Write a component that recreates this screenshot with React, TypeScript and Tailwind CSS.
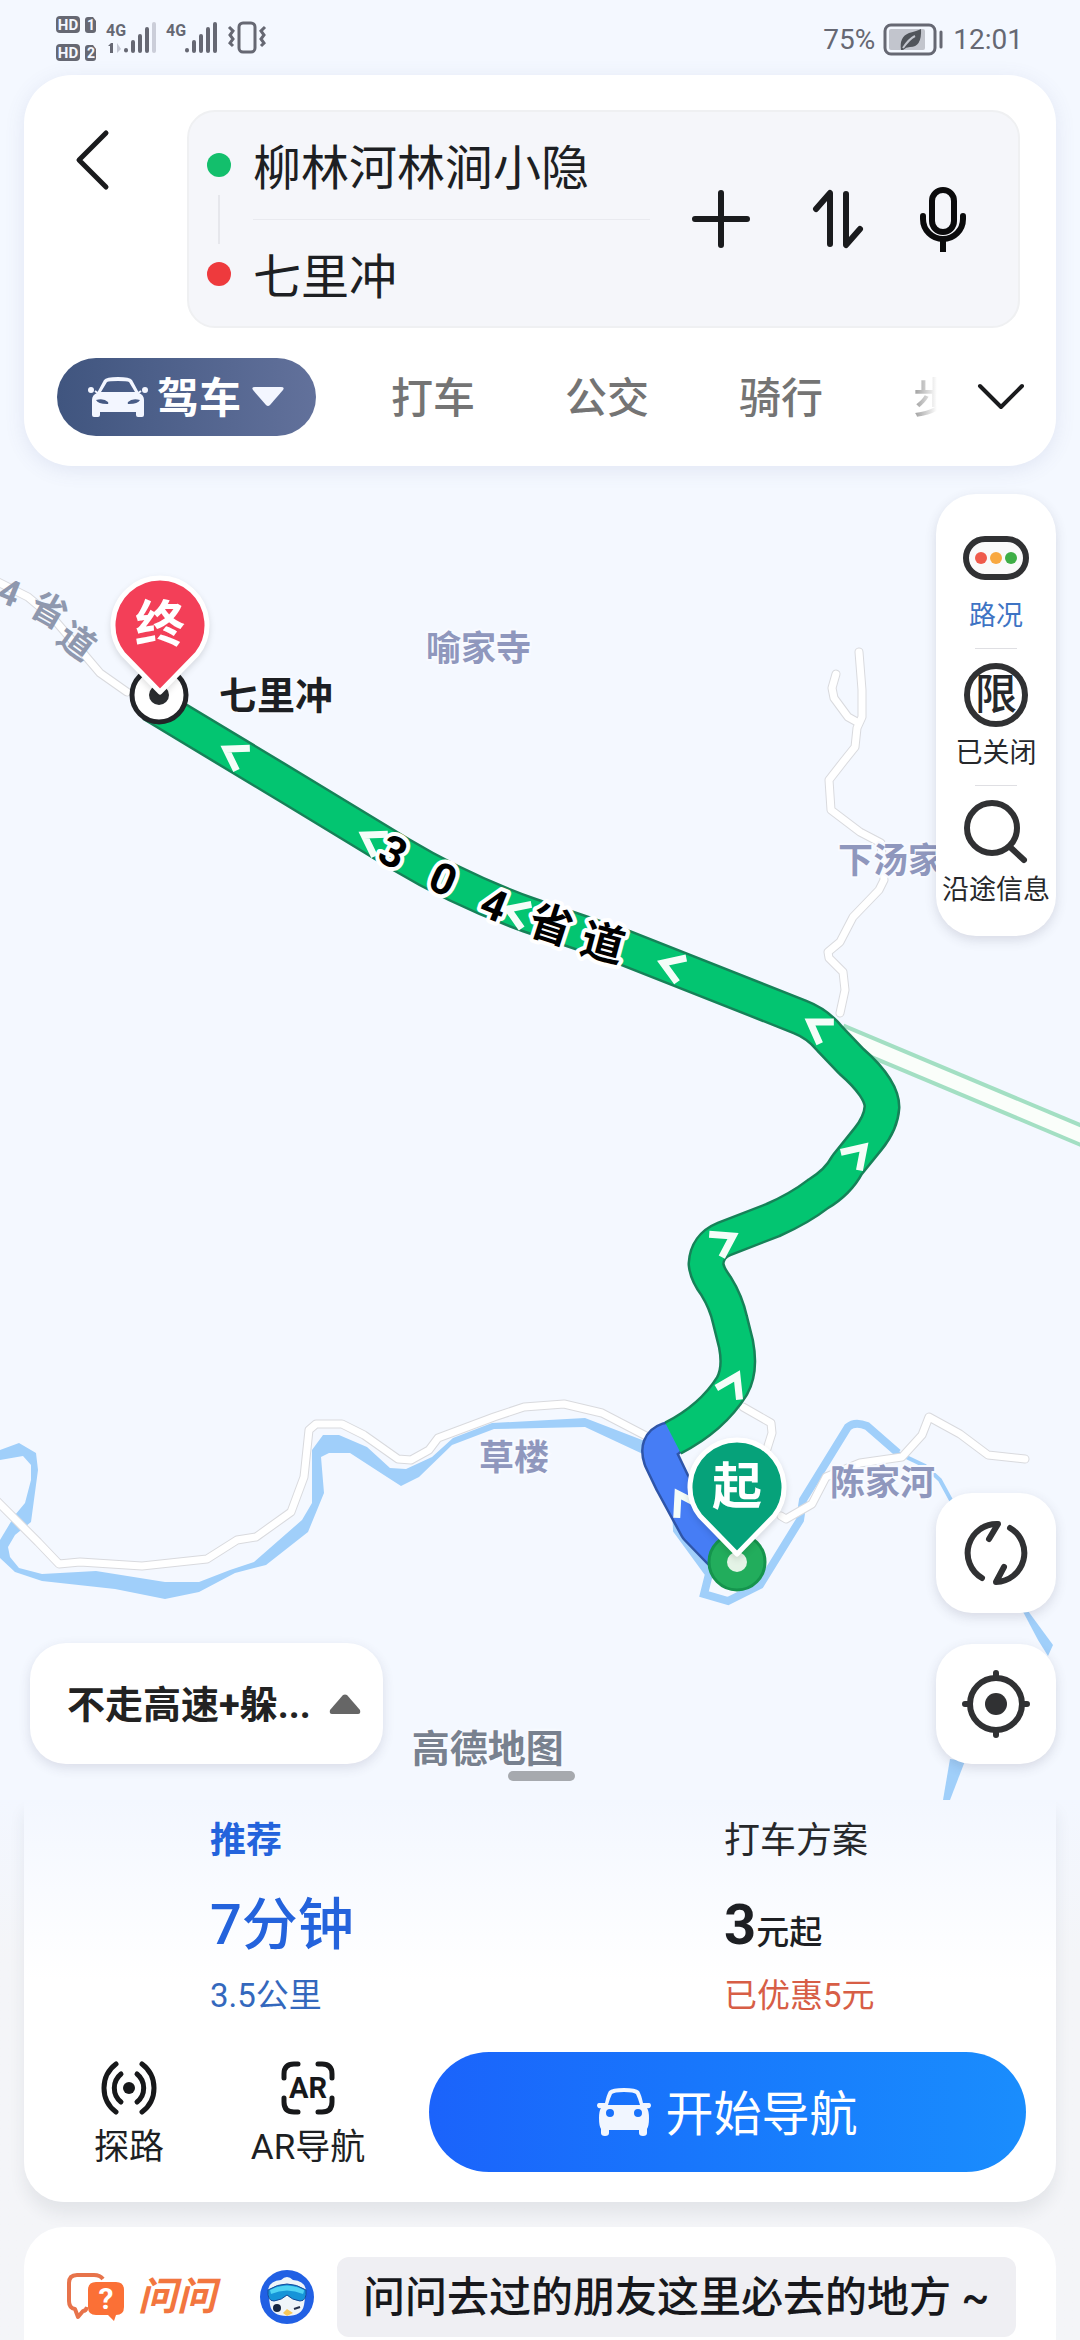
import { useState } from "react";

const WATER =
  "M0 1450L19 1443L36 1453L38 1470L31 1522L15 1535L8 1547L10 1557L19 1568L42 1574L96 1571L165 1582L199 1582L230 1570L254 1562L302 1520L312 1503L312 1450L323 1435L339 1435L367 1447L390 1468L406 1469L432 1457L453 1438L492 1423L585 1418L650 1443L645 1455L585 1427L494 1429L452 1445L419 1477L401 1486L387 1477L350 1453L329 1453L321 1457L324 1493L308 1532L266 1565L235 1573L199 1592L165 1599L115 1589L42 1581L15 1572L0 1558L0 1540L15 1515L25 1503L31 1480L31 1465L23 1456L0 1460Z";

const ROADS = [
  "M-6 1498L23 1527L38 1542L59 1564L80 1562L142 1566L207 1559L237 1540L256 1537L291 1512L304 1477L309 1430L316 1424L342 1424L364 1435L398 1459L411 1460L429 1450L438 1438L494 1417L524 1407L564 1404L602 1413L650 1438",
  "M859 652L862 690L862 717L857 728L855 747L843 762L829 780L831 810L860 832L881 843L884 880L879 890L853 917L840 942L828 952L829 958L843 972L845 990L840 1013",
  "M836 674L832 688L834 698L848 717L857 722",
  "M743 1407L771 1423L772 1433L767 1449",
  "M781 1516L786 1519L812 1504L826 1477L860 1463L902 1457L922 1435L929 1417L960 1434L988 1455L1025 1459",
  "M-6 580L28 597L52 617L83 653L100 673L127 692",
];

const ROUTE =
  "M152 704L293 789L400 854Q460 890 529 915L623 947L800 1017Q818 1024 830 1039L851 1061Q882 1088 882 1107Q881 1123 868 1139L847 1165Q838 1182 818 1194Q800 1208 773 1220L724 1239Q707 1246 706 1264Q707 1274 716 1286Q726 1302 730 1320L736 1344Q741 1370 732 1386Q712 1418 673 1438";
const ROUTE_START = "M668 1440Q656 1444 661 1459L672 1482L697 1528L728 1560";

// tip x, tip y, rotation of a chevron that points left
const ARROWS = [
  [226, 749, 31],
  [364, 835, 31],
  [508, 909, 22],
  [663, 963, 21],
  [810, 1022, 33],
  [864, 1147, 134],
  [733, 1236, 151],
  [737, 1376, 117],
  [678, 1494, 60],
];

const ROUTE_NAME: [string, number, number, number][] = [
  ["3", 393, 852, 27],
  ["0", 443, 879, 24],
  ["4", 494, 905, 22],
  ["省", 551, 925, 18],
  ["道", 603, 943, 15],
];

const PLACES: [string, number, number][] = [
  ["喻家寺", 426, 661],
  ["下汤家", 838, 873],
  ["草楼", 479, 1470],
  ["陈家河", 830, 1495],
];

const Pin = ({ x, y, color, label }: { x: number; y: number; color: string; label: string }) => (
  <g transform={`translate(${x} ${y})`}>
    <path
      d="M0 68L-37 30A47 47 0 1 1 37 30Z"
      fill={color}
      stroke="#fff"
      strokeWidth={5}
      strokeLinejoin="round"
      className="drop-shadow-md"
    />
    <text y={18} textAnchor="middle" fontSize={50} fontWeight={700} fill="#fff">
      {label}
    </text>
  </g>
);

const RouteMap = () => (
  <svg
    viewBox="0 0 1080 1800"
    preserveAspectRatio="xMidYMid slice"
    className="absolute inset-0 h-full w-full"
    aria-label="路线地图"
  >
    <path d={WATER} fill="#a0cffa" />
    <path
      d="M676 1508L677 1530L709 1574L704 1594L728 1601L760 1585L800 1520L803 1500L848 1427Q855 1421 867 1426L898 1453"
      fill="none"
      stroke="#a0cffa"
      strokeWidth={8}
    />
    <path d="M867 1426L898 1453L925 1466L940 1480L952 1502" fill="none" stroke="#a0cffa" strokeWidth={4} />
    <path d="M1020 1600L1053 1645L1048 1656L1038 1640L1020 1606Z" fill="#a0cffa" />
    <path d="M950 1759L965 1761L950 1800L943 1800Z" fill="#a0cffa" />
    {ROADS.map((d) => (
      <path key={d} d={d} fill="none" stroke="#d9dade" strokeWidth={9} strokeLinejoin="round" strokeLinecap="round" />
    ))}
    {ROADS.map((d) => (
      <path key={d} d={d} fill="none" stroke="#fff" strokeWidth={7} strokeLinejoin="round" strokeLinecap="round" />
    ))}
    <path d="M840 1034L1090 1139" stroke="#a3dfc3" strokeWidth={22} />
    <path d="M840 1034L1090 1139" stroke="#fafefa" strokeWidth={14} />

    {PLACES.map(([name, x, y]) => (
      <text
        key={name}
        x={x}
        y={y}
        fontSize={35}
        fontWeight={700}
        fill="#8f97bd"
        stroke="#f8faff"
        strokeWidth={4}
        paintOrder="stroke"
      >
        {name}
      </text>
    ))}
    <g fill="#8f98ae" fontSize={36} fontWeight={700} textAnchor="middle">
      <text transform="translate(9 593) rotate(22)" y={12}>
        4
      </text>
      <text transform="translate(49 610) rotate(30)" y={13}>
        省
      </text>
      <text transform="translate(77 641) rotate(36)" y={13}>
        道
      </text>
    </g>

    <g fill="none" strokeLinejoin="round">
      <path d={ROUTE_START} stroke="#2f55a8" strokeWidth={37} strokeLinecap="round" />
      <path d={ROUTE} stroke="#168258" strokeWidth={37} />
      <path d={ROUTE_START} stroke="#467df5" strokeWidth={32} strokeLinecap="round" />
      <path d={ROUTE} stroke="#03c571" strokeWidth={32} />
      {ARROWS.map(([x, y, r]) => (
        <path
          key={`${x}-${y}`}
          d="M20 -13L0 0L20 13"
          transform={`translate(${x} ${y}) rotate(${r})`}
          stroke="#f4fdf8"
          strokeWidth={7}
          strokeLinejoin="miter"
        />
      ))}
    </g>
    <g fontSize={43} fontWeight={700} textAnchor="middle" stroke="#fff" strokeWidth={8} strokeLinejoin="round" paintOrder="stroke">
      {ROUTE_NAME.map(([char, x, y, r]) => (
        <text key={char} transform={`translate(${x} ${y}) rotate(${r})`} y={15}>
          {char}
        </text>
      ))}
    </g>

    <circle cx={159} cy={695} r={27} fill="#fff" stroke="#222428" strokeWidth={5} />
    <circle cx={159} cy={695} r={10} fill="#2b2e31" />
    <Pin x={160} y={624} color="#f33f58" label="终" />
    <text x={219} y={709} fontSize={38} fontWeight={700} fill="#1d1f23" stroke="#f8faff" strokeWidth={4} paintOrder="stroke">
      七里冲
    </text>
    <circle cx={737} cy={1562} r={28} fill="#22ad5c" stroke="#15944d" strokeWidth={3} />
    <circle cx={737} cy={1562} r={10} fill="#e4f3e6" />
    <Pin x={737} y={1486} color="#06a27a" label="起" />
  </svg>
);

const Signal = ({ x, weak }: { x: number; weak?: boolean }) => (
  <g strokeWidth={4} strokeLinecap="round" stroke="#666873">
    <path d={`M${x} 50v0.5M${x + 7} 42v9M${x + 14} 36v15M${x + 21} 29v22`} />
    <path d={`M${x + 28} 24v27`} stroke={weak ? "#cbced9" : "#666873"} />
  </g>
);

const StatusBar = () => (
  <div className="flex h-[75px] items-start justify-between pr-[57px] pl-[54px] text-[#666873]">
    <svg viewBox="54 0 214 75" className="h-[75px] w-[214px]" fill="#666873" fontWeight={700}>
      {[16, 44].map((y, i) => (
        <g key={y}>
          <rect x={56} y={y} width={24} height={17} rx={4} />
          <path d={`M85 ${y + 4}q0 -3 3 -3h5l3 4v9q0 3 -3 3h-5q-3 0 -3 -3z`} />
          <text x={68} y={y + 14} fontSize={15} textAnchor="middle" fill="#f4f7ff">
            HD
          </text>
          <text x={91} y={y + 14} fontSize={14} textAnchor="middle" fill="#f4f7ff">
            {i + 1}
          </text>
        </g>
      ))}
      <text x={106} y={36} fontSize={16} fontWeight={700}>
        4G
      </text>
      <text x={166} y={36} fontSize={16} fontWeight={700}>
        4G
      </text>
      <path d="M108 46l3 -3h2v10h-3v-7z" />
      <path d="M117 43v10l4 -4z" fill="#c4c7d3" />
      <Signal x={126} weak />
      <Signal x={187} />
      <g fill="none" stroke="#666873" strokeWidth={3}>
        <rect x={239} y={23} width={16} height={29} rx={4} />
        <path d="M229 27l4 4l-3 4l3 4l-3 4l3 3M265 27l-4 4l3 4l-3 4l3 4l-3 3" />
      </g>
    </svg>
    <div className="flex items-center gap-2 pt-[22px] text-[28px] leading-9">
      <span>75%</span>
      <svg viewBox="0 0 62 34" className="h-[34px] w-[62px]">
        <rect x={2} y={2} width={50} height={29} rx={6} fill="none" stroke="#666873" strokeWidth={3} />
        <rect x={6} y={6} width={36} height={21} rx={2} fill="#c2c5cd" />
        <path d="M18 27Q16 14 26 10Q34 8 38 6Q39 24 27 24Q23 24 20 27Z" fill="#50545a" />
        <path d="M20 25Q26 16 32 13" stroke="#c2c5cd" strokeWidth={2} fill="none" />
        <path d="M58 9v15" stroke="#666873" strokeWidth={3} strokeLinecap="round" />
      </svg>
      <span>12:01</span>
    </div>
  </div>
);

const MODES = ["打车", "公交", "骑行"];

const SearchCard = () => {
  const [from, setFrom] = useState("柳林河林涧小隐");
  const [to, setTo] = useState("七里冲");

  return (
    <header className="mx-6 rounded-[48px] bg-white pt-[35px] pb-[30px] shadow-[0_4px_20px_rgba(90,100,160,0.12)]">
      <div className="flex items-start pr-9 pl-12">
        <button aria-label="返回" className="mt-[18px] h-[64px] w-[64px]">
          <svg viewBox="0 0 64 64" fill="none" stroke="#1a1b1d" strokeWidth={5} strokeLinecap="round" strokeLinejoin="round">
            <path d="M34 5L7 32L34 59" />
          </svg>
        </button>
        <div className="ml-[51px] flex flex-1 items-center rounded-[28px] border-2 border-[#eff0f2] bg-[#f5f6fa] pr-[52px] pl-[18px]">
          <div className="flex flex-col items-center gap-[18px]">
            <span className="h-6 w-6 rounded-full bg-[#13bf6c]" />
            <span className="h-[49px] w-[2px] bg-[#e6e7ec]" />
            <span className="h-6 w-6 rounded-full bg-[#ee3a3d]" />
          </div>
          <div className="ml-[22px] flex h-[214px] flex-1 flex-col justify-center text-[48px] text-[#1d1f23]">
            <input
              aria-label="起点"
              value={from}
              onChange={(e) => setFrom(e.target.value)}
              className="h-[64px] w-full bg-transparent pt-2 outline-none"
            />
            <hr className="mt-[22px] mb-[22px] border-[#e9eaef]" />
            <input
              aria-label="终点"
              value={to}
              onChange={(e) => setTo(e.target.value)}
              className="h-[64px] w-full bg-transparent pt-2 outline-none"
            />
          </div>
          <div className="ml-[38px] flex items-center gap-14">
            <button aria-label="添加途经点" className="h-[66px] w-[66px]">
              <svg viewBox="0 0 66 66" stroke="#1a1b1d" strokeWidth={6} strokeLinecap="round">
                <path d="M33 7V59M7 33H59" />
              </svg>
            </button>
            <button aria-label="交换起终点" className="h-[66px] w-[54px]">
              <svg viewBox="0 0 54 66" fill="none" stroke="#1a1b1d" strokeWidth={6} strokeLinecap="round" strokeLinejoin="round">
                <path d="M6 23L20 7V58M50 43L36 59V8" />
              </svg>
            </button>
            <button aria-label="语音输入" className="h-[66px] w-[46px]">
              <svg viewBox="2 0 46 66" fill="none" stroke="#0b0b0c" strokeWidth={6}>
                <rect x={14} y={4} width={22} height={42} rx={11} />
                <path d="M5 30V33A20 20 0 0 0 45 33V30" strokeLinecap="round" />
                <path d="M25 54V66" />
              </svg>
            </button>
          </div>
        </div>
      </div>
      <nav className="mt-[30px] flex items-center pr-[30px] pl-[33px] text-[42px] font-medium text-[#747474]">
        <button className="flex h-[78px] items-center rounded-full bg-gradient-to-r from-[#40557f] to-[#62719b] pr-[31px] pl-[30px] text-white">
          <svg viewBox="0 0 62 44" className="h-[44px] w-[62px]" fill="#f3f6ff">
            <path
              fillRule="evenodd"
              d="M17 5Q19 2 31 2Q43 2 45 5L52 18Q57 20 57 25V40Q57 42 55 42H51Q49 42 49 40V37H13V40Q13 42 11 42H7Q5 42 5 40V25Q5 20 10 18ZM20 7L14 17H48L42 7Q40 6 31 6Q22 6 20 7ZM9 25Q11 29 20 29Q22 29 21 27Q17 23 9 25ZM53 25Q51 29 42 29Q40 29 41 27Q45 23 53 25Z"
            />
            <circle cx={4} cy={15} r={3} />
            <circle cx={58} cy={15} r={3} />
            <path d="M8 16L12 19M54 16L50 19" stroke="#f3f6ff" strokeWidth={2} />
          </svg>
          <span className="ml-2 pt-[3px] font-bold">驾车</span>
          <svg viewBox="0 0 34 20" className="ml-[10px] h-5 w-[34px]" fill="#f3f6ff">
            <path d="M4 0H30Q34 0 32 3L19 18Q17 20 15 18L2 3Q0 0 4 0Z" />
          </svg>
        </button>
        <div className="ml-[75px] flex flex-1 items-center gap-[90px] overflow-hidden pt-[3px]">
          {MODES.map((mode) => (
            <button key={mode} className="shrink-0">
              {mode}
            </button>
          ))}
          <button className="w-[24px] shrink-0 overflow-hidden bg-gradient-to-r from-[#9a9a9a] to-white bg-clip-text whitespace-nowrap text-transparent">
            步行
          </button>
        </div>
        <button aria-label="展开更多方式" className="h-[30px] w-[50px]">
          <svg viewBox="0 0 50 30" fill="none" stroke="#1a1b1d" strokeWidth={4} strokeLinecap="round" strokeLinejoin="round">
            <path d="M4 4L25 25L46 4" />
          </svg>
        </button>
      </nav>
    </header>
  );
};

const SideTools = () => (
  <aside className="mt-7 mr-6 flex w-[120px] flex-col items-center self-end rounded-[40px] bg-white pt-10 pb-7 text-[27px] leading-9 whitespace-nowrap text-[#26282b] shadow-[0_4px_12px_rgba(60,60,90,0.16)]">
    <button className="flex flex-col items-center text-[#3e74c4]">
      <svg viewBox="0 0 66 48" className="h-12 w-[66px]">
        <rect x={3} y={5} width={60} height={38} rx={19} fill="#fafafa" stroke="#303133" strokeWidth={6} />
        <circle cx={18} cy={24} r={6} fill="#ef5b4c" />
        <circle cx={33} cy={24} r={6} fill="#f8a840" />
        <circle cx={48} cy={24} r={6} fill="#3eae46" />
      </svg>
      <span className="mt-4">路况</span>
    </button>
    <hr className="mt-[14px] w-[42px] border-[#dfdfe3]" />
    <button className="mt-[14px] flex flex-col items-center">
      <span className="flex h-16 w-16 items-center justify-center rounded-full border-[6px] border-[#303133] text-[42px] font-medium">
        限
      </span>
      <span className="mt-2">已关闭</span>
    </button>
    <hr className="mt-[14px] w-[42px] border-[#dfdfe3]" />
    <button className="mt-3 flex flex-col items-center">
      <svg viewBox="0 0 64 66" className="h-[66px] w-16" fill="none" stroke="#303133" strokeWidth={6}>
        <circle cx={28} cy={30} r={25} />
        <path d="M46 49L60 62" strokeLinecap="round" />
      </svg>
      <span className="mt-2">沿途信息</span>
    </button>
  </aside>
);

const MapControls = () => (
  <div className="mt-auto flex flex-col pr-6 pb-[19px] pl-[30px]">
    <button
      aria-label="刷新路线"
      className="flex h-[120px] w-[120px] items-center justify-center self-end rounded-[36px] bg-white shadow-[0_4px_12px_rgba(60,60,90,0.16)]"
    >
      <svg viewBox="0 0 66 66" className="h-[66px] w-[66px]" fill="none" stroke="#303133" strokeWidth={6} strokeLinecap="round" strokeLinejoin="round">
        <path d="M19 58A29 29 0 0 1 35 4L26 19M47 8A29 29 0 0 1 33 62L41 47" />
      </svg>
    </button>
    <div className="mt-[30px] flex items-end">
      <button className="mb-[17px] flex h-[121px] items-center rounded-[36px] bg-white pr-[22px] pl-[37px] text-[38px] font-bold text-[#222] shadow-[0_4px_12px_rgba(60,60,90,0.14)]">
        <span className="pt-1">不走高速+躲...</span>
        <svg viewBox="0 0 32 20" className="ml-[18px] h-5 w-8" fill="#666">
          <path d="M14 1Q16 0 18 1L31 16Q32 20 29 20H3Q0 20 1 16Z" />
        </svg>
      </button>
      <div className="ml-[29px] flex w-[163px] flex-col">
        <span className="text-[38px] leading-[44px] font-bold text-[#78818f] [text-shadow:0_0_4px_#fff]">高德地图</span>
        <span className="h-[10px] w-[67px] self-end rounded-full bg-[#a6a9ae]" />
      </div>
      <button
        aria-label="定位"
        className="mb-[17px] ml-auto flex h-[120px] w-[120px] items-center justify-center rounded-[36px] bg-white shadow-[0_4px_12px_rgba(60,60,90,0.16)]"
      >
        <svg viewBox="0 0 70 70" className="h-[70px] w-[70px]" fill="none" stroke="#303133" strokeWidth={6} strokeLinecap="round">
          <circle cx={35} cy={35} r={26} />
          <circle cx={35} cy={35} r={11} fill="#303133" stroke="none" />
          <path d="M35 4V9M35 61V66M4 35H9M61 35H66" />
        </svg>
      </button>
    </div>
  </div>
);

const RouteSheet = () => (
  <section className="mx-6 rounded-b-[40px] bg-gradient-to-b from-[#f3f7ff] to-white to-[45%] pb-[30px] shadow-[0_12px_16px_rgba(40,50,60,0.08)]">
    <div className="grid grid-cols-2 text-left text-[33px] leading-10">
      <button className="flex flex-col items-start pt-4 pl-[186px] text-[#3468bd]">
        <span className="text-[36px] leading-[50px] font-bold text-[#2463dc]">推荐</span>
        <strong className="mt-5 h-[78px] text-[56px] leading-[78px] font-medium text-[#2463dc]">7分钟</strong>
        <span className="mt-3">3.5公里</span>
      </button>
      <button className="flex flex-col items-start pt-4 pl-[184px] text-[#d75e46]">
        <span className="text-[36px] leading-[50px] text-[#26282b]">打车方案</span>
        <strong className="mt-5 flex h-[78px] items-baseline text-[33px] leading-[78px] font-medium text-[#1d1f23]">
          <span className="text-[56px] font-bold">3</span>元起
        </strong>
        <span className="mt-3">已优惠5元</span>
      </button>
    </div>
    <div className="mt-9 flex items-center pr-[30px] pl-[66px] text-[35px] leading-[48px] text-[#1d1f23]">
      <button className="flex w-[78px] flex-col items-center pt-2">
        <svg viewBox="0 0 62 56" className="h-14 w-[62px]" fill="none" stroke="#17181a" strokeWidth={5} strokeLinecap="round">
          <path d="M18 4A30 30 0 0 0 18 52M44 4A30 30 0 0 1 44 52M23 14A18 18 0 0 0 23 42M39 14A18 18 0 0 1 39 42" />
          <circle cx={31} cy={28} r={6} fill="#17181a" stroke="none" />
        </svg>
        <span className="mt-2">探路</span>
      </button>
      <button className="ml-[75px] flex w-[130px] flex-col items-center pt-2">
        <svg viewBox="0 0 56 56" className="h-14 w-14" fill="none" stroke="#17181a" strokeWidth={5} strokeLinecap="round">
          <path d="M4 18V14Q4 4 14 4H18M38 4H42Q52 4 52 14V18M52 38V42Q52 52 42 52H38M18 52H14Q4 52 4 42V38" />
          <text x={28} y={38} fontSize={29} fontWeight={700} textAnchor="middle" fill="#17181a" stroke="none">
            AR
          </text>
        </svg>
        <span className="mt-2">AR导航</span>
      </button>
      <button className="ml-14 flex h-[120px] flex-1 items-center justify-center rounded-full bg-gradient-to-r from-[#1b63fb] to-[#1a8dfd] text-[48px] text-white">
        <svg viewBox="0 0 54 48" className="h-12 w-[54px]" fill="#f1f6ff">
          <path
            fillRule="evenodd"
            d="M12 3Q15 0 27 0Q39 0 42 3Q44 6 46 15L52 15Q54 15 54 18Q53 21 50 20Q52 23 52 30Q52 38 50 41V45Q50 48 46 48Q42 48 42 45V42H12V45Q12 48 8 48Q4 48 4 45V41Q2 38 2 30Q2 23 4 20Q1 21 0 18Q0 15 2 15L8 15Q10 6 12 3ZM15 6Q13 10 11 17H43Q41 10 39 6Q37 4 27 4Q17 4 15 6ZM13 21A4 4 0 0 0 13 29A4 4 0 0 0 13 21ZM41 21A4 4 0 0 0 41 29A4 4 0 0 0 41 21Z"
          />
        </svg>
        <span className="ml-[14px] pt-[6px]">开始导航</span>
      </button>
    </div>
  </section>
);

const AskCard = () => (
  <section className="mx-6 mt-[25px] flex items-center rounded-t-[40px] bg-white pt-[30px] pr-10 pb-[3px] pl-[42px] whitespace-nowrap">
    <svg viewBox="0 0 60 50" className="h-[50px] w-[60px] shrink-0">
      <path
        d="M37 7Q34 3 28 3H11Q3 3 3 11V29Q3 36 9 37L12 45L17 39Q20 39 21 35"
        fill="none"
        stroke="#e7734b"
        strokeWidth={4}
        strokeLinejoin="round"
      />
      <path d="M30 10H50Q58 10 58 18V35Q58 43 50 43L48 49L42 43H30Q22 43 22 35V18Q22 10 30 10Z" fill="#fb7036" />
      <text x={40} y={37} fontSize={30} fontWeight={700} textAnchor="middle" fill="#fff">
        ?
      </text>
    </svg>
    <span className="ml-3 shrink-0 text-[39px] leading-[50px] font-bold text-[#f2763f] italic">问问</span>
    <svg viewBox="0 0 54 54" className="ml-[44px] h-[54px] w-[54px] shrink-0">
      <circle cx={27} cy={27} r={27} fill="#2160e4" />
      <path d="M8 22Q8 11 21 10Q27 4 33 10Q46 11 46 22L44 35Q42 46 27 46Q12 46 10 35Z" fill="#eff5fa" />
      <path d="M8 20Q27 8 46 20Q47 31 40 31Q32 30 27 25Q22 30 14 31Q7 31 8 20Z" fill="#1694d8" stroke="#174a9a" />
      <path d="M10 20Q27 11 44 20Q44 22 43 24Q27 17 11 24Z" fill="#50d3f3" />
      <circle cx={17} cy={38} r={4} fill="#172640" />
      <path d="M34 39L40 37" stroke="#25304a" strokeWidth={2} />
      <path d="M27 39L33 43L27 46L23 43Z" fill="#f8c95a" />
    </svg>
    <a
      href="#ask"
      className="ml-[23px] flex-1 rounded-[12px] bg-[#efeff3] pt-[2px] pl-[26px] text-[42px] leading-[78px] font-medium text-[#17181c]"
    >
      问问去过的朋友这里必去的地方 ~
    </a>
  </section>
);

const App = () => {
  return (
    <div className="flex min-h-screen flex-col bg-[#f4f5f8] font-[Roboto,'Noto_Sans_CJK_SC',sans-serif]">
      <main className="relative flex flex-1 flex-col overflow-hidden bg-[#f4f8ff]">
        <RouteMap />
        <div className="relative flex flex-1 flex-col">
          <StatusBar />
          <SearchCard />
          <SideTools />
          <MapControls />
        </div>
      </main>
      <div className="bg-gradient-to-b from-[#f3f7ff] to-[#f4f5f8] to-[30%]">
        <RouteSheet />
        <AskCard />
      </div>
    </div>
  );
};

export default App;
